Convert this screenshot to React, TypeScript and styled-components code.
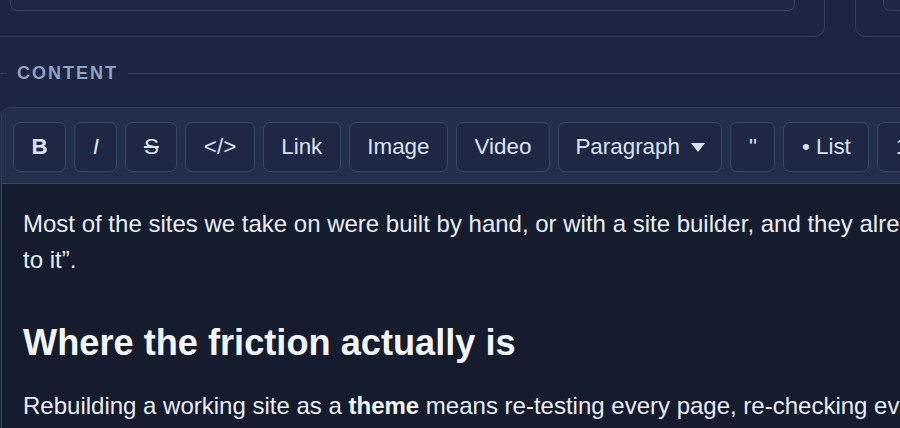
import React from "react";
import styled, { createGlobalStyle, css } from "styled-components";

const GlobalStyle = createGlobalStyle`
  html, body {
    margin: 0;
    padding: 0;
    background: #1c2541;
    overflow: hidden;
  }
  body {
    font-family: "Liberation Sans", Arial, sans-serif;
    color: #e6eaf3;
  }
`;

const Page = styled.div`
  width: 1400px;
`;

const TopRow = styled.div`
  display: grid;
  grid-template-columns: 845px 600px;
  column-gap: 30px;
  margin-left: -20px;
  margin-top: -63px;
`;

const Card = styled.div<{ $side: "left" | "right" }>`
  height: 100px;
  box-sizing: border-box;
  border: 1px solid #35415f;
  border-radius: 10px;
  padding: 25px 29px 25px ${(p) => (p.$side === "left" ? "29px" : "27px")};
`;

const Field = styled.div`
  height: 48px;
  box-sizing: border-box;
  border: 1px solid #3a4767;
  border-radius: 7px;
  background: #1e2845;
`;

const SectionLabel = styled.div`
  display: flex;
  align-items: center;
  gap: 10px;
  margin-top: 26px;
  height: 20px;
`;

const Rule = styled.div<{ $grow?: boolean }>`
  height: 1px;
  background: #34405e;
  ${(p) =>
    p.$grow
      ? css`
          flex: 1;
        `
      : css`
          flex: 0 0 7px;
        `}
`;

const LabelText = styled.span`
  font-size: 18px;
  font-weight: 700;
  letter-spacing: 2px;
  line-height: 20px;
  color: #93a2c1;
  text-transform: uppercase;
`;

const Editor = styled.div`
  margin-top: 24px;
  margin-left: 1px;
  width: 1290px;
  border: 1px solid #34405f;
  border-radius: 9px;
  overflow: hidden;
`;

const Toolbar = styled.div`
  display: flex;
  gap: 8px;
  padding: 14px 11px 11px;
  background: #232e4b;
  border-bottom: 1px solid #3a4769;
`;

const ToolButton = styled.button<{ $variant?: "bold" | "italic" | "strike" | "menu" }>`
  display: inline-flex;
  align-items: center;
  gap: 11px;
  height: 50px;
  box-sizing: border-box;
  padding: 0 ${(p) => (p.$variant === "menu" ? "16.5px" : "17.5px")};
  border: 1px solid #3a4767;
  border-radius: 7px;
  background: #1e2744;
  color: #dbe2ef;
  font-family: "Liberation Sans", Arial, sans-serif;
  font-size: 22.4px;
  line-height: 1;
  white-space: nowrap;
  cursor: pointer;
  ${(p) =>
    p.$variant === "bold" &&
    css`
      font-weight: 700;
    `}
  ${(p) =>
    p.$variant === "italic" &&
    css`
      font-style: italic;
    `}
  ${(p) =>
    p.$variant === "strike" &&
    css`
      text-decoration: line-through;
    `}
`;

const Caret = styled.svg`
  width: 14px;
  height: 9px;
  flex: 0 0 auto;
`;

const Body = styled.div`
  background: #151c2e;
  padding: 22px 21px 40px;
  font-size: 24px;
  line-height: 36px;
  color: #e9edf5;
`;

const Para = styled.p`
  margin: 0 0 20px;
`;

const Heading = styled.h2`
  margin: 42px 0 23px;
  font-size: 36.2px;
  line-height: 1.25;
  font-weight: 700;
  color: #f3f5fa;
`;

const Strong = styled.strong`
  font-weight: 700;
  color: #f5f7fb;
`;

export default function App() {
  return (
    <>
      <GlobalStyle />
      <Page>
        <TopRow>
          <Card $side="left">
            <Field />
          </Card>
          <Card $side="right">
            <Field />
          </Card>
        </TopRow>

        <SectionLabel>
          <Rule />
          <LabelText>Content</LabelText>
          <Rule $grow />
        </SectionLabel>

        <Editor>
          <Toolbar>
            <ToolButton $variant="bold">B</ToolButton>
            <ToolButton $variant="italic">I</ToolButton>
            <ToolButton $variant="strike">S</ToolButton>
            <ToolButton>&lt;/&gt;</ToolButton>
            <ToolButton>Link</ToolButton>
            <ToolButton>Image</ToolButton>
            <ToolButton>Video</ToolButton>
            <ToolButton $variant="menu">
              Paragraph
              <Caret viewBox="0 0 14 9" aria-hidden="true">
                <polygon points="0,0 14,0 7,9" fill="#dbe2ef" />
              </Caret>
            </ToolButton>
            <ToolButton>"</ToolButton>
            <ToolButton>• List</ToolButton>
            <ToolButton>1. List</ToolButton>
            <ToolButton>―</ToolButton>
          </Toolbar>
          <Body>
            <Para>
              Most of the sites we take on were built by hand, or with a site builder, and they
              already work. The brief is “add a blog to it”.
            </Para>
            <Heading>Where the friction actually is</Heading>
            <Para>
              Rebuilding a working site as a <Strong>theme</Strong> means re-testing every page,
              re-checking every form, and re-learning every quirk the original site already solved.
            </Para>
          </Body>
        </Editor>
      </Page>
    </>
  );
}
